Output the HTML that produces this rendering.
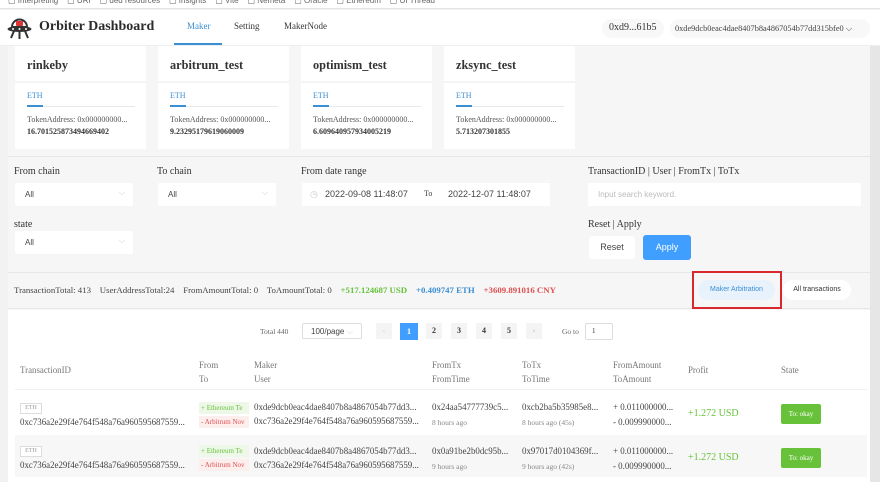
<!DOCTYPE html>
<html><head><meta charset="utf-8"><style>
*{box-sizing:border-box;margin:0;padding:0}
body{width:880px;height:482px;overflow:hidden;background:#f2f2f2;font-family:"Liberation Serif",serif;color:#333;position:relative}
.abs{position:absolute}
.bm{top:0;left:0;width:880px;height:9px;background:#fff;border-bottom:1px solid #e3e3e3;font:8px "Liberation Sans",sans-serif;color:#666;overflow:hidden;line-height:0}
.hdr{top:10px;left:0;width:880px;height:36px;background:#fff;border-bottom:1px solid #eee}
.main{top:46px;left:8px;width:862px;height:436px;background:#f6f6f6}
.sb{top:46px;left:870px;width:10px;height:436px;background:#e6e6e6}
.card{background:#fff;width:131px;height:103px;top:46px}
.card .t{font-weight:bold;font-size:12.3px;color:#333;position:absolute;left:12px;top:12px}
.card .sep{position:absolute;left:0;top:35px;width:131px;height:2px;background:#f4f4f4}
.card .eth{position:absolute;left:12px;top:45px;font-size:8px;color:#3b8fd3}
.card .ln{position:absolute;left:12px;top:60px;width:108px;height:1px;background:#e8e8e8}
.card .ln:before{content:"";position:absolute;left:0;top:-1px;width:16px;height:2px;background:#3b8fd3}
.card .ta{position:absolute;left:12px;top:69px;font-size:8px;color:#555}
.card .v{position:absolute;left:12px;top:81px;font-size:8px;font-weight:bold;color:#333}
.lbl{font-size:10px;color:#333}
.sel{background:#fff;height:23px;font:8px "Liberation Sans",sans-serif;color:#444;padding:7px 10px;border-radius:2px}
.sel:after{content:"⌵";position:absolute;right:8px;top:5px;color:#ccc;font-size:8px}
.td{font-size:8.9px;color:#444;white-space:nowrap}
.sm{font-size:7.5px;color:#888;white-space:nowrap}
.tag{font-size:7px;padding:2px;overflow:hidden;white-space:nowrap;width:50px;height:12px}
</style></head><body>
<div class="abs bm"><span style="position:absolute;left:8px;top:-3px;line-height:8px">▢ Interpreting &nbsp;&nbsp; ▢ URI &nbsp;&nbsp; ▢ ded resources &nbsp;&nbsp; ▢ Insights &nbsp;&nbsp; ▢ Vite &nbsp;&nbsp; ▢ Nemeta &nbsp;&nbsp; ▢ Oracle &nbsp;&nbsp; ▢ Ethereum &nbsp;&nbsp; ▢ UI Thread</span></div>
<div class="abs hdr">
 <svg class="abs" style="left:6px;top:5px" width="27" height="27" viewBox="0 0 27 27"><path d="M6 12a7.5 7.5 0 0 1 15 0z" fill="none" stroke="#333" stroke-width="2"/><rect x="10" y="6" width="7" height="5" rx="1" fill="#d33"/><ellipse cx="13.5" cy="14" rx="12" ry="3" fill="#333"/><circle cx="7" cy="14" r="1" fill="#fff"/><circle cx="13.5" cy="14" r="1" fill="#fff"/><circle cx="20" cy="14" r="1" fill="#fff"/><path d="M8 16l-3 7M13.5 17v7M19 16l3 7" stroke="#333" stroke-width="2"/></svg>
 <div class="abs" style="left:39px;top:9px;font-size:14px;font-weight:bold;color:#2b2b2b">Orbiter Dashboard</div>
 <div class="abs" style="left:187px;top:11px;font-size:9px;color:#3b8fd3">Maker</div>
 <div class="abs" style="left:174px;top:33px;width:48px;height:2px;background:#3b8fd3"></div>
 <div class="abs" style="left:234px;top:11px;font-size:9px;color:#333">Setting</div>
 <div class="abs" style="left:284px;top:11px;font-size:9px;color:#333">MakerNode</div>
 <div class="abs" style="left:602px;top:9px;width:62px;height:19px;border-radius:10px;background:#f8f8f8;font-size:10px;padding:3px 7px">0xd9...61b5</div>
 <div class="abs" style="left:670px;top:9px;width:200px;height:19px;border-radius:10px;background:#f8f8f8;font-size:8.3px;padding:5px 5px;color:#444;white-space:nowrap">0xde9dcb0eac4dae8407b8a4867054b77dd315bfe0 ⌵</div>
</div>
<div class="abs main"></div>
<div class="abs sb"></div>
<div class="abs card" style="left:15px"><div class="t">rinkeby</div><div class="sep"></div><div class="eth">ETH</div><div class="ln"></div><div class="ta">TokenAddress: 0x000000000...</div><div class="v">16.701525873494669402</div></div>
<div class="abs card" style="left:158px"><div class="t">arbitrum_test</div><div class="sep"></div><div class="eth">ETH</div><div class="ln"></div><div class="ta">TokenAddress: 0x000000000...</div><div class="v">9.23295179619060009</div></div>
<div class="abs card" style="left:301px"><div class="t">optimism_test</div><div class="sep"></div><div class="eth">ETH</div><div class="ln"></div><div class="ta">TokenAddress: 0x000000000...</div><div class="v">6.609640957934005219</div></div>
<div class="abs card" style="left:444px"><div class="t">zksync_test</div><div class="sep"></div><div class="eth">ETH</div><div class="ln"></div><div class="ta">TokenAddress: 0x000000000...</div><div class="v">5.713207301855</div></div>
<div class="abs" style="left:8px;top:156px;width:862px;height:1px;background:#e6e6e6"></div>
<div class="abs lbl" style="left:14px;top:166px">From chain</div>
<div class="abs lbl" style="left:157px;top:166px">To chain</div>
<div class="abs lbl" style="left:301px;top:166px">From date range</div>
<div class="abs lbl" style="left:588px;top:166px">TransactionID | User | FromTx | ToTx</div>
<div class="abs sel" style="left:15px;top:183px;width:118px">All</div>
<div class="abs sel" style="left:158px;top:183px;width:118px">All</div>
<div class="abs" style="left:302px;top:183px;width:248px;height:23px;background:#fff;font:9px 'Liberation Sans',sans-serif;color:#444"><span class="abs" style="left:8px;top:6px;color:#ccc">◷</span><span class="abs" style="left:23px;top:6px">2022-09-08 11:48:07</span><span class="abs" style="left:122px;top:6px;font-family:'Liberation Serif';font-size:8px">To</span><span class="abs" style="left:146px;top:6px">2022-12-07 11:48:07</span></div>
<div class="abs" style="left:588px;top:183px;width:273px;height:23px;background:#fff;font:8px 'Liberation Sans',sans-serif;color:#bbb;padding:7px 10px">Input search keyword.</div>
<div class="abs lbl" style="left:14px;top:219px">state</div>
<div class="abs lbl" style="left:588px;top:219px">Reset | Apply</div>
<div class="abs sel" style="left:15px;top:231px;width:118px">All</div>
<div class="abs" style="left:589px;top:236px;width:46px;height:23px;background:#fff;border-radius:3px;font:9px 'Liberation Sans',sans-serif;text-align:center;line-height:23px;color:#444">Reset</div>
<div class="abs" style="left:643px;top:235px;width:48px;height:25px;background:#409eff;border-radius:3px;font:9px 'Liberation Sans',sans-serif;text-align:center;line-height:25px;color:#fff">Apply</div>
<div class="abs" style="left:8px;top:272px;width:862px;height:1px;background:#e6e6e6"></div>
<div class="abs" style="left:8px;top:308px;width:862px;height:1px;background:#e6e6e6"></div>
<div class="abs" style="left:14px;top:285px;font-size:8.8px;color:#444;white-space:nowrap">TransactionTotal: 413 &nbsp;&nbsp; UserAddressTotal:24 &nbsp;&nbsp; FromAmountTotal: 0 &nbsp;&nbsp; ToAmountTotal: 0 &nbsp;&nbsp; <b style="color:#67c23a">+517.124687 USD</b> &nbsp;&nbsp; <b style="color:#3b8fd3">+0.409747 ETH</b> &nbsp;&nbsp; <b style="color:#e05050">+3609.891016 CNY</b></div>
<div class="abs" style="left:692px;top:271px;width:90px;height:38px;border:2px solid #d9272e"></div>
<div class="abs" style="left:698px;top:280px;width:77px;height:20px;border-radius:10px;background:#e8f2fc;font:7px 'Liberation Sans',sans-serif;color:#3b8fd3;text-align:center;line-height:20px">Maker Arbitration</div>
<div class="abs" style="left:783px;top:280px;width:68px;height:20px;border-radius:10px;background:#fff;font:7px 'Liberation Sans',sans-serif;color:#333;text-align:center;line-height:20px">All transactions</div>
<div class="abs" style="left:8px;top:310px;width:862px;height:172px;background:#fff"></div>
<div class="abs" style="left:260px;top:327px;font-size:7.5px;color:#666">Total 440</div>
<div class="abs" style="left:302px;top:323px;width:60px;height:16px;border:1px solid #ddd;border-radius:2px;font:8px 'Liberation Sans',sans-serif;padding:3px 8px;color:#444">100/page <span style="color:#ccc;float:right">⌵</span></div>
<div class="abs" style="left:376px;top:323px;width:16px;height:16px;background:#f4f4f5;color:#ccc;font-size:7px;text-align:center;line-height:16px">‹</div>
<div class="abs" style="left:400px;top:323px;width:18px;height:17px;background:#409eff;color:#fff;font-size:8px;text-align:center;line-height:17px;font-weight:bold">1</div>
<div class="abs" style="left:426px;top:323px;width:16px;height:16px;background:#f4f4f5;font-size:8px;text-align:center;line-height:16px;font-weight:bold">2</div>
<div class="abs" style="left:451px;top:323px;width:16px;height:16px;background:#f4f4f5;font-size:8px;text-align:center;line-height:16px;font-weight:bold">3</div>
<div class="abs" style="left:476px;top:323px;width:16px;height:16px;background:#f4f4f5;font-size:8px;text-align:center;line-height:16px;font-weight:bold">4</div>
<div class="abs" style="left:501px;top:323px;width:16px;height:16px;background:#f4f4f5;font-size:8px;text-align:center;line-height:16px;font-weight:bold">5</div>
<div class="abs" style="left:526px;top:323px;width:16px;height:16px;background:#f4f4f5;color:#bbb;font-size:8px;text-align:center;line-height:16px">›</div>
<div class="abs" style="left:562px;top:327px;font-size:7.5px;color:#666">Go to</div>
<div class="abs" style="left:585px;top:323px;width:28px;height:17px;border:1px solid #ddd;border-radius:2px;font-size:7px;padding:3px 6px">1</div>
<div class="abs" style="left:15px;top:389px;width:852px;height:1px;background:#f0f0f0"></div>
<div class="abs" style="left:15px;top:435px;width:852px;height:42px;background:#f7f7f7"></div>
<div class="abs td" style="left:20px;top:365px;color:#777">TransactionID</div>
<div class="abs td" style="left:199px;top:358px;color:#777;line-height:14px">From<br>To</div>
<div class="abs td" style="left:254px;top:358px;color:#777;line-height:14px">Maker<br>User</div>
<div class="abs td" style="left:432px;top:358px;color:#777;line-height:14px">FromTx<br>FromTime</div>
<div class="abs td" style="left:522px;top:358px;color:#777;line-height:14px">ToTx<br>ToTime</div>
<div class="abs td" style="left:613px;top:358px;color:#777;line-height:14px">FromAmount<br>ToAmount</div>
<div class="abs td" style="left:688px;top:365px;color:#777">Profit</div>
<div class="abs td" style="left:781px;top:365px;color:#777">State</div>
<!-- row 1 -->
<div class="abs" style="left:20px;top:403px;width:22px;height:11px;border:1px solid #ddd;font-size:6px;color:#999;text-align:center;line-height:9px">ETH</div>
<div class="abs td" style="left:20px;top:417px">0xc736a2e29f4e764f548a76a960595687559...</div>
<div class="abs tag" style="left:199px;top:402px;background:#eef8e8;color:#67c23a">+ Ethereum Te</div>
<div class="abs tag" style="left:199px;top:416px;background:#fdeeee;color:#e05050">- Arbitrum Nov</div>
<div class="abs td" style="left:254px;top:402px">0xde9dcb0eac4dae8407b8a4867054b77dd3...</div>
<div class="abs td" style="left:254px;top:416px">0xc736a2e29f4e764f548a76a960595687559...</div>
<div class="abs td" style="left:432px;top:402px">0x24aa54777739c5...</div>
<div class="abs sm" style="left:432px;top:418px">8 hours ago</div>
<div class="abs td" style="left:522px;top:402px">0xcb2ba5b35985e8...</div>
<div class="abs sm" style="left:522px;top:418px">8 hours ago (45s)</div>
<div class="abs td" style="left:613px;top:402px">+ 0.011000000...</div>
<div class="abs td" style="left:613px;top:417px">- 0.009990000...</div>
<div class="abs td" style="left:688px;top:408px;color:#67c23a;font-size:10px">+1.272 USD</div>
<div class="abs" style="left:781px;top:404px;width:40px;height:20px;background:#67c23a;color:#fff;font-size:7px;text-align:center;line-height:20px;border-radius:2px">To: okay</div>
<!-- row 2 -->
<div class="abs" style="left:20px;top:446px;width:22px;height:11px;border:1px solid #ddd;background:#fff;font-size:6px;color:#999;text-align:center;line-height:9px">ETH</div>
<div class="abs td" style="left:20px;top:460px">0xc736a2e29f4e764f548a76a960595687559...</div>
<div class="abs tag" style="left:199px;top:445px;background:#eef8e8;color:#67c23a">+ Ethereum Te</div>
<div class="abs tag" style="left:199px;top:459px;background:#fdeeee;color:#e05050">- Arbitrum Nov</div>
<div class="abs td" style="left:254px;top:446px">0xde9dcb0eac4dae8407b8a4867054b77dd3...</div>
<div class="abs td" style="left:254px;top:460px">0xc736a2e29f4e764f548a76a960595687559...</div>
<div class="abs td" style="left:432px;top:446px">0x0a91be2b0dc95b...</div>
<div class="abs sm" style="left:432px;top:462px">9 hours ago</div>
<div class="abs td" style="left:522px;top:446px">0x97017d0104369f...</div>
<div class="abs sm" style="left:522px;top:462px">9 hours ago (42s)</div>
<div class="abs td" style="left:613px;top:446px">+ 0.011000000...</div>
<div class="abs td" style="left:613px;top:461px">- 0.009990000...</div>
<div class="abs td" style="left:688px;top:452px;color:#67c23a;font-size:10px">+1.272 USD</div>
<div class="abs" style="left:781px;top:448px;width:40px;height:20px;background:#67c23a;color:#fff;font-size:7px;text-align:center;line-height:20px;border-radius:2px">To: okay</div>
</body></html>
